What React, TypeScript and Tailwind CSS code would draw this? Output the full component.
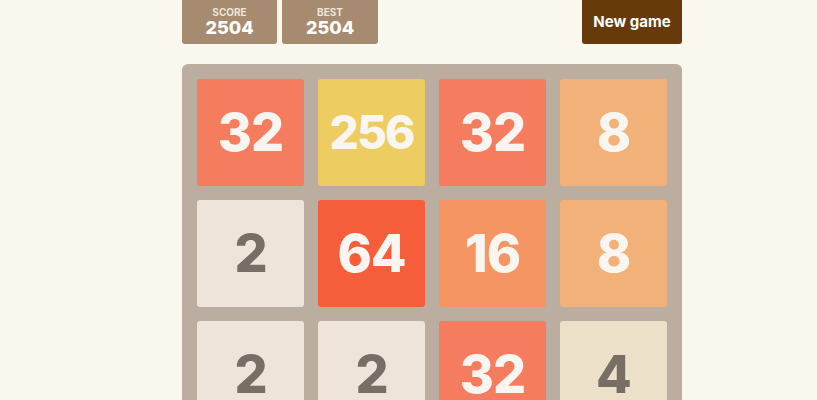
const tiles: number[] = [32, 256, 32, 8, 2, 64, 16, 8, 2, 2, 32, 4];

const tileStyle: Record<number, string> = {
  2: 'bg-[#eee4da] text-[#776e65]',
  4: 'bg-[#ede0c8] text-[#776e65]',
  8: 'bg-[#f2b179] text-[#f9f6f2]',
  16: 'bg-[#f59563] text-[#f9f6f2]',
  32: 'bg-[#f67c5f] text-[#f9f6f2]',
  64: 'bg-[#f65e3b] text-[#f9f6f2]',
  256: 'bg-[#edcc61] text-[#f9f6f2]',
};

function ScoreBox({ label, value }: { label: string; value: number }) {
  return (
    <div className="flex flex-col items-center justify-center h-[44px] bg-[#a68b70] rounded-b-[3px]">
      <span className="text-[10px] leading-[12px] font-bold uppercase text-[#eee4da]">{label}</span>
      <span className="text-[18px] leading-[20px] font-extrabold text-white">{value}</span>
    </div>
  );
}

export default function App() {
  return (
    <div
      className="h-[400px] overflow-hidden bg-[#faf7ef]"
      style={{ fontFamily: 'Inter, "Open Sans", sans-serif' }}
    >
      <div className="ml-[182px] w-[500px]">
        {/* Header */}
        <div className="flex items-start justify-between h-[44px]">
          <div className="grid grid-cols-[95px_96px] gap-[5px]">
            <ScoreBox label="Score" value={2504} />
            <ScoreBox label="Best" value={2504} />
          </div>
          <button className="w-[100px] h-[44px] bg-[#673a0c] text-white text-[15px] font-bold rounded-b-[3px]">
            New game
          </button>
        </div>

        {/* Board */}
        <div className="mt-[20px] bg-[#bbada0] rounded-[6px] p-[15px] grid grid-cols-4 gap-[14px]">
          {tiles.map((v, i) => (
            <div
              key={i}
              className={`h-[107px] rounded-[3px] flex items-center justify-center font-extrabold ${
                v >= 100 ? 'text-[46px] tracking-[-2px]' : 'text-[52px] tracking-[-1px]'
              } ${tileStyle[v]}`}
            >
              {v}
            </div>
          ))}
        </div>
      </div>
    </div>
  );
}
